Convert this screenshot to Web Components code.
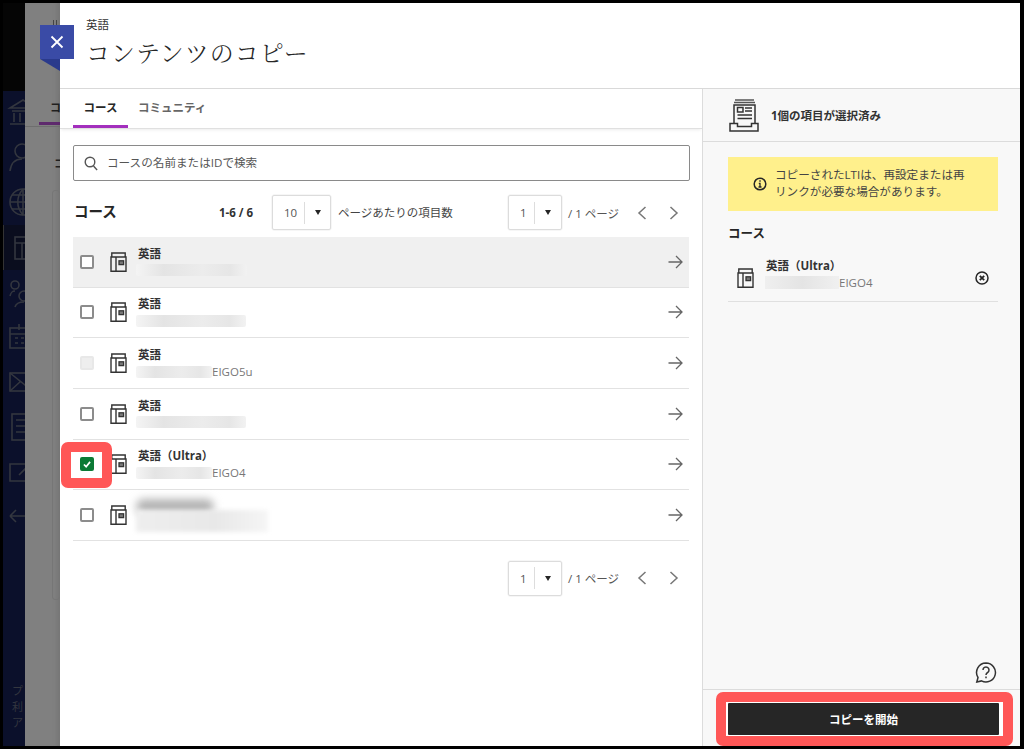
<!DOCTYPE html>
<html lang="ja">
<head>
<meta charset="utf-8">
<title>コンテンツのコピー</title>
<style>
    html, body { margin: 0; height: 749px; overflow: hidden; background: #000; }
    body { font-family: "Open Sans", "Noto Sans CJK JP", sans-serif; color: #262626; }
    app-shell { width: 1024px; height: 749px; }
</style>
</head>
<body>
<app-shell>
    <bg-nav slot="nav"></bg-nav>
    <bg-page slot="page"></bg-page>
    <copy-modal slot="modal">
        <span slot="crumb">英語</span>
        <span slot="title">コンテンツのコピー</span>
        <course-tabs slot="tabs"></course-tabs>
        <search-box slot="search" placeholder="コースの名前またはIDで検索"></search-box>
        <course-toolbar slot="toolbar"></course-toolbar>
        <course-row slot="list" hover title-text="英語" blur="136,111"></course-row>
        <course-row slot="list" title-text="英語" blur="136,110"></course-row>
        <course-row slot="list" disabled title-text="英語" blur="136,76" code="EIGO5u"></course-row>
        <course-row slot="list" title-text="英語" blur="136,110"></course-row>
        <course-row slot="list" checked title-text="英語（Ultra）" blur="136,76" code="EIGO4"></course-row>
        <course-row slot="list" hidden-name></course-row>
        <page-nav slot="pager"></page-nav>
        <selected-panel slot="side"></selected-panel>
    </copy-modal>
</app-shell>

<script>
const ICONS = {
    course: `<svg width="17" height="20" viewBox="0 0 17 20" fill="none" stroke="#333" stroke-width="1.4"><path d="M1.800 5V1h13.400v4M1 5h15v14.200H1zM6 5v14.200"/><rect x="9" y="8.800" width="4.600" height="3.800" stroke-width="1.300" fill="#777"/></svg>`,
    arrow: `<svg width="15" height="14" viewBox="0 0 15 14" fill="none" stroke="#666" stroke-width="1.3"><path d="M0.500 7h13.500M8 1l6 6-6 6"/></svg>`,
    left: `<svg width="10" height="14" viewBox="0 0 10 14" fill="none" stroke="#777" stroke-width="1.500"><path d="M8.500 1L2 7l6.500 6"/></svg>`,
    right: `<svg width="10" height="14" viewBox="0 0 10 14" fill="none" stroke="#777" stroke-width="1.500"><path d="M1.500 1L8 7l-6.500 6"/></svg>`,
    search: `<svg width="14" height="15" viewBox="0 0 14 15" fill="none" stroke="#555" stroke-width="1.400"><circle cx="6" cy="6" r="4.800"/><path d="M9.500 10l3.600 4"/></svg>`,
    tray: `<svg width="30" height="33" viewBox="0 0 30 33" fill="none" stroke="#333" stroke-width="1.500"><path d="M6 1h19M5 3.500h21" stroke="#555"/><path d="M5 24V6h21v18"/><rect x="8.500" y="8.500" width="5.500" height="4.500"/><path d="M16 9h7M16 12h7M8.500 16h14.500M8.500 19.500h14.500"/><path d="M1 24.500h7.500v3h14v-3H29v7.500H1z"/></svg>`,
    info: `<svg width="14" height="14" viewBox="0 0 14 14" fill="none" stroke="#262626" stroke-width="1.500"><circle cx="7" cy="7" r="5.800"/><path d="M5.500 10h3M7 10V6.300H5.800" stroke-width="1.300"/><path d="M6.300 4h1.400" stroke-width="1.300"/></svg>`,
    remove: `<svg width="14" height="14" viewBox="0 0 14 14" fill="none" stroke="#262626" stroke-width="1.500"><circle cx="7" cy="7" r="6"/><path d="M4.800 4.800l4.400 4.400M9.200 4.800l-4.400 4.400" stroke-width="1.800"/></svg>`,
    help: `<svg width="22" height="21" viewBox="0 0 22 21" fill="none" stroke="#333" stroke-width="1.500"><path d="M11 1a9.500 9.500 0 1 1-4.500 17.900L1.800 20l1.200-4.500A9.500 9.500 0 0 1 11 1z"/><path d="M8 8a3 3 0 1 1 4.600 2.500c-1.100.7-1.600 1.200-1.600 2.500"/><path d="M11 14.500v1.800"/></svg>`,
    close: `<svg width="14" height="14" viewBox="0 0 14 14" fill="none" stroke="#fff" stroke-width="1.800"><path d="M1.500 1.500l11 11M12.500 1.500l-11 11"/></svg>`,
    check: `<svg width="8" height="7" viewBox="0 0 9 8" fill="none" stroke="#fff" stroke-width="2"><path d="M1 4l2.500 2.500L8 1"/></svg>`
};

const NAV_ICONS = [
    `<path d="M3 12L16 4l13 8zM5 15h22M7 17v9M13 17v9M19 17v9M25 17v9M3 28h26"/>`,
    `<circle cx="15" cy="10" r="7"/><path d="M3 30c1-8 5-12 12-12"/>`,
    `<circle cx="16" cy="16" r="13"/><path d="M3 16h26M5 9h22M5 23h22M16 3c-7 8-7 18 0 26M16 3v26"/>`,
    `<rect x="8" y="6" width="22" height="22"/><path d="M8 12h22M15 12v16"/><rect x="19" y="16" width="6" height="5"/>`,
    `<circle cx="8" cy="9" r="4"/><circle cx="17" cy="20" r="5"/><path d="M3 20c1-4 2-5 5-5M8 31c1-4 4-5 9-5"/>`,
    `<rect x="3" y="8" width="28" height="20"/><path d="M3 14h28M8 18h3M14 18h3M8 23h3M14 23h3M12 4v6"/>`,
    `<rect x="3" y="8" width="30" height="18"/><path d="M3 8l15 12L33 8M3 26l11-10"/>`,
    `<rect x="5" y="4" width="24" height="26"/><path d="M9 10h20M9 16h20M9 22h20"/>`,
    `<path d="M18 9H3v17h15M12 20L26 6"/>`,
    `<path d="M28 6c-3-2-6-2-8-1v22c3 1 6 1 8-1M3 16h22M3 16l6-6M3 16l6 6"/>`
];

class AppShell extends HTMLElement {
    constructor() {
        super();
        this.attachShadow({ mode: 'open' });
        this.shadowRoot.innerHTML = `
        <style>
            :host { display: flex; box-sizing: border-box; padding: 3px 4px 3px 3px; background: #000; }
            ::slotted([slot="nav"]) { flex: 0 0 22px; }
            ::slotted([slot="page"]) { flex: 0 0 35px; }
            ::slotted([slot="modal"]) { flex: 0 0 960px; }
        </style>
        <slot name="nav"></slot><slot name="page"></slot><slot name="modal"></slot>`;
    }
}

class BgNav extends HTMLElement {
    constructor() {
        super();
        this.attachShadow({ mode: 'open' });
        const items = NAV_ICONS.map((d, i) => `<div class="item ${i === 3 ? 'on' : ''}">
            <svg width="36" height="34" viewBox="0 0 36 34" fill="none" stroke="#33363f" stroke-width="1.600">${d}</svg></div>`).join('');
        this.shadowRoot.innerHTML = `
        <style>
            :host { display: flex; flex-direction: column; overflow: hidden; background: #0b102b; }
            .top { height: 88px; background: #050505; flex: none; }
            .item { height: 44.800px; display: flex; align-items: center; padding-left: 4px; box-sizing: border-box; }
            .item svg { flex: none; display: block; }
            .on { background: #0a0d1e; border-left: 1px solid #333; padding-left: 3px; }
            .foot { margin-top: auto; padding: 0 0 15px 9px; font-size: 11px; line-height: 16px; color: #33363f; }
        </style>
        <div class="top"></div>
        <div class="items">${items}</div>
        <div class="foot">プ<br>利<br>ア</div>`;
    }
}

class BgPage extends HTMLElement {
    constructor() {
        super();
        this.attachShadow({ mode: 'open' });
        this.shadowRoot.innerHTML = `
        <style>
            :host { display: block; overflow: hidden; background: #808080; box-shadow: inset -6px 0 4px -3px #767676; font-weight: 700; color: #1f1f1f; font-size: 11px; }
            .marks { height: 88px; box-sizing: border-box; padding: 17px 0 0 28px; display: flex; gap: 2px; }
            .marks i { display: block; width: 1px; height: 5px; background: #444; }
            .tab { height: 36px; box-sizing: border-box; padding-top: 8px; border-bottom: 1px solid #6e6e6e; }
            .tab span { display: block; padding-left: 25px; line-height: 17px; }
            .tab i { display: block; width: 30px; height: 3px; background: #5e2a6d; margin: 6px 0 0 14px; }
            .h { padding: 28px 0 0 29px; height: 25px; font-size: 11px; }
            .card { margin: 10px 0 0 27px; height: 408px; border: 1px solid #767676; border-radius: 3px; }
        </style>
        <div class="marks"><i></i><i></i></div>
        <div class="tab"><span>コ</span><i></i></div>
        <div class="h">コ</div>
        <div class="card"></div>`;
    }
}

class CopyModal extends HTMLElement {
    constructor() {
        super();
        this.attachShadow({ mode: 'open' });
        this.shadowRoot.innerHTML = `
        <style>
            :host { display: flex; flex-direction: column; position: relative; background: #fff; overflow: visible; }
            header { height: 86px; box-sizing: border-box; border-bottom: 1px solid #d9d9d9; padding: 14px 0 0 26px; flex: none; }
            .crumb { font-size: 11.500px; line-height: 16px; color: #333; }
            .title { font-family: "Noto Serif CJK JP", "Noto Sans CJK JP", serif; font-size: 24px; font-weight: 300; line-height: 36px; color: #262626; margin: 1px 0 0 0; letter-spacing: 1px; }
            .close { position: absolute; left: -20px; top: 22px; width: 34px; height: 34px; background: #3a4ba6; display: flex; align-items: center; justify-content: center; }
            .close::after { content: ""; position: absolute; left: 0; top: 34px; border-style: solid; border-width: 0 20px 12px 0; border-color: transparent #2a3a8c transparent transparent; }
            .body { flex: 1; display: flex; min-height: 0; }
            .left { flex: 0 0 642px; display: flex; flex-direction: column; box-sizing: border-box; }
            .inner { padding: 16px 13px 0; display: flex; flex-direction: column; }
            .list { margin-top: 7px; }
            ::slotted([slot="side"]) { flex: 1; }
        </style>
        <header>
            <div class="crumb"><slot name="crumb"></slot></div>
            <div class="title"><slot name="title"></slot></div>
        </header>
        <div class="close">${ICONS.close}</div>
        <div class="body">
            <div class="left">
                <slot name="tabs"></slot>
                <div class="inner">
                    <slot name="search"></slot>
                    <slot name="toolbar"></slot>
                    <div class="list"><slot name="list"></slot></div>
                    <slot name="pager"></slot>
                </div>
            </div>
            <slot name="side"></slot>
        </div>`;
    }
}

class CourseTabs extends HTMLElement {
    constructor() {
        super();
        this.attachShadow({ mode: 'open' });
        this.shadowRoot.innerHTML = `
        <style>
            :host { display: flex; height: 40px; box-sizing: border-box; padding-left: 13px; border-bottom: 1px solid #e0e0e0; box-shadow: 0 2px 3px -1px rgba(0,0,0,.08); font-size: 11.500px; font-weight: 700; }
            div { height: 39px; box-sizing: border-box; padding-top: 10px; line-height: 18px; }
            .on { width: 55px; text-align: center; border-bottom: 3px solid #a32fbd; color: #262626; }
            .off { margin-left: 10px; color: #666; }
        </style>
        <div class="on">コース</div><div class="off">コミュニティ</div>`;
    }
}

class SearchBox extends HTMLElement {
    constructor() {
        super();
        this.attachShadow({ mode: 'open' });
        this.shadowRoot.innerHTML = `
        <style>
            :host { display: flex; align-items: center; height: 36px; margin-right: -1px; box-sizing: border-box; border: 1px solid #8a8a8a; border-radius: 2px; padding-left: 10px; }
            span { margin: -3px 0 0 9px; font-size: 11.600px; color: #555; }
            svg { display: block; }
        </style>
        ${ICONS.search}<span>${this.getAttribute('placeholder')}</span>`;
    }
}

class PageSelect extends HTMLElement {
    constructor() {
        super();
        this.attachShadow({ mode: 'open' });
        const wide = this.hasAttribute('wide');
        this.shadowRoot.innerHTML = `
        <style>
            :host { display: flex; align-items: center; box-sizing: border-box; width: ${wide ? 59 : 54}px; height: 35px; border: 1px solid #dcdcdc; border-radius: 2px; font-size: 11.500px; color: #555; box-shadow: 0 0 0 .5px #eee; flex: none; }
            .v { width: ${wide ? 31 : 25}px; padding-left: 11px; box-sizing: border-box; }
            .d { width: 1px; height: 22px; background: #ddd; }
            .a { margin-left: 10px; width: 0; height: 0; border-style: solid; border-width: 5px 3.500px 0; border-color: #262626 transparent transparent; }
        </style>
        <span class="v"><slot></slot></span><span class="d"></span><span class="a"></span>`;
    }
}

class PageNav extends HTMLElement {
    constructor() {
        super();
        this.attachShadow({ mode: 'open' });
        this.shadowRoot.innerHTML = `
        <style>
            :host { display: flex; align-items: center; justify-content: flex-end; height: 35px; margin-top: 20px; font-size: 11.500px; color: #555; }
            .t { margin-left: 6px; width: 52px; white-space: nowrap; }
            .p { margin-left: 17px; display: flex; }
            .n { margin-left: 22px; display: flex; margin-right: 10px; }
        </style>
        <page-select>1</page-select><span class="t">/ 1 ページ</span>
        <span class="p">${ICONS.left}</span><span class="n">${ICONS.right}</span>`;
    }
}

class CourseToolbar extends HTMLElement {
    constructor() {
        super();
        this.attachShadow({ mode: 'open' });
        this.shadowRoot.innerHTML = `
        <style>
            :host { display: flex; align-items: center; height: 35px; margin-top: 14px; font-size: 11.500px; color: #444; }
            h2 { margin: -5px 0 0 1px; width: 145px; font-size: 14.500px; font-weight: 700; color: #262626; }
            .count { width: 53px; font-weight: 700; color: #333; white-space: nowrap; }
            .per { margin-left: 7px; white-space: nowrap; margin-top: -1px; }
            page-nav { flex: 1; margin-top: 0; }
        </style>
        <h2>コース</h2><span class="count">1-6 / 6</span>
        <page-select wide>10</page-select><span class="per">ページあたりの項目数</span>
        <page-nav></page-nav>`;
    }
}

class HlFrame extends HTMLElement {
    constructor() {
        super();
        this.attachShadow({ mode: 'open' });
        this.shadowRoot.innerHTML = `
        <style>
            :host { display: block; box-sizing: border-box; border: 10px solid #ff5757; border-radius: 7px; }
        </style>
        <slot></slot>`;
    }
}

class CourseRow extends HTMLElement {
    constructor() {
        super();
        this.attachShadow({ mode: 'open' });
        const title = this.getAttribute('title-text') || '';
        const bw = Number((this.getAttribute('blur') || '0,0').split(',')[1]);
        const code = this.getAttribute('code') || '';
        const checked = this.hasAttribute('checked');
        const box = this.hasAttribute('disabled') ? 'box dis' : checked ? 'box chk' : 'box';
        const text = this.hasAttribute('hidden-name')
            ? `<div class="smear dark"></div><div class="smear wide"></div>`
            : `<div class="t">${title}</div><div class="s"><i style="width:${bw}px"></i>${code}</div>`;
        this.shadowRoot.innerHTML = `
        <style>
            :host { display: flex; align-items: center; position: relative; height: 50.650px; box-sizing: border-box; border-bottom: 1px solid #e2e2e2; padding-left: 7px; }
            :host([hover]) { background: #f0f0f0; }
            .box { width: 14px; height: 14px; box-sizing: border-box; border: 2px solid #8c8c8c; border-radius: 2px; background: #fff; flex: none; display: flex; align-items: center; justify-content: center; }
            .dis { border-color: #e8e8e8; background: #eee; }
            .chk { border-color: #0b7a35; background: #0b7a35; }
            .ic { margin-left: 16px; display: flex; flex: none; }
            .txt { margin-left: 11px; flex: 1; position: relative; height: 50px; }
            .t { position: absolute; left: 0; top: 8px; font-size: 11.500px; line-height: 18px; font-weight: 700; color: #333; white-space: nowrap; }
            .s { position: absolute; left: -2px; top: 26.500px; height: 14px; display: flex; align-items: center; font-size: 11.500px; color: #777; }
            .s i { display: block; height: 12px; background: linear-gradient(90deg, #f4f4f4, #e4e4e4 25%, #ececec 60%, #e6e6e6 85%, #f2f2f2); border-radius: 2px; }
            .smear { position: absolute; left: -2px; }
            .dark { top: 9px; width: 78px; height: 15px; background: #b4b4b4; filter: blur(4px); border-radius: 8px; }
            .wide { top: 20px; width: 132px; height: 22px; background: linear-gradient(90deg, #eee, #e8e8e8 60%, #f5f5f5); filter: blur(2px); }
            .arr { margin-right: 6px; display: flex; flex: none; }
            hl-frame { position: absolute; left: -12px; top: 2.500px; width: 51px; height: 46px; z-index: 2; }
        </style>
        <span class="${box}">${checked ? ICONS.check : ''}</span>
        <span class="ic">${ICONS.course}</span>
        <div class="txt">${text}</div>
        <span class="arr">${ICONS.arrow}</span>
        ${checked ? '<hl-frame></hl-frame>' : ''}`;
    }
}

class SelectedPanel extends HTMLElement {
    constructor() {
        super();
        this.attachShadow({ mode: 'open' });
        this.shadowRoot.innerHTML = `
        <style>
            :host { display: flex; flex-direction: column; box-sizing: border-box; background: #f8f8f8; border-left: 1px solid #dcdcdc; min-width: 0; }
            .head { height: 53px; flex: none; box-sizing: border-box; border-bottom: 1px solid #dcdcdc; display: flex; align-items: center; padding: 0 0 0 26px; font-size: 11.500px; font-weight: 700; color: #333; }
            .head span { margin-left: 12px; }
            .head svg { display: block; }
            .main { flex: 1; padding: 15px 22px 0 25px; position: relative; }
            .note { height: 54px; background: #fff08c; display: flex; align-items: center; box-sizing: border-box; padding-left: 25px; font-size: 11.600px; line-height: 17px; color: #444; }
            .note p { margin: -2px 0 0 8px; width: 194px; }
            .note svg { flex: none; display: block; }
            h3 { margin: 14px 0 0; font-size: 12.500px; line-height: 18px; font-weight: 700; color: #262626; }
            .item { margin-top: 11px; box-sizing: border-box; border-bottom: 1px solid #e0e0e0; display: flex; align-items: center; padding: 0 9px; height: 48px; }
            .item .ic { display: flex; flex: none; }
            .item .tx { margin-left: 12px; flex: 1; margin-top: -9px; }
            .tl { font-size: 11.500px; line-height: 18px; font-weight: 700; color: #333; }
            .cd { display: flex; align-items: center; height: 14px; margin-left: -1px; font-size: 11.500px; color: #777; }
            .cd i { display: block; width: 74px; height: 13px; background: linear-gradient(90deg, #efefef, #e4e4e4 50%, #f0f0f0); }
            .help { position: absolute; right: 23px; bottom: 6px; display: flex; }
            .foot { flex: none; height: 57px; box-sizing: border-box; border-top: 1px solid #dcdcdc; padding: 2px 7px 0 13px; }
            hl-frame { height: 54px; background: #fff; padding: 1px 4px 1px 2px; }
            button { display: block; width: 100%; height: 32px; border: 0; border-radius: 1px; background: #262626; color: #fff; font: 700 11.500px "Open Sans", "Noto Sans CJK JP", sans-serif; padding: 0; }
        </style>
        <div class="head">${ICONS.tray}<span>1個の項目が選択済み</span></div>
        <div class="main">
            <div class="note">${ICONS.info}<p>コピーされたLTIは、再設定または再リンクが必要な場合があります。</p></div>
            <h3>コース</h3>
            <div class="item">
                <span class="ic">${ICONS.course}</span>
                <div class="tx"><div class="tl">英語（Ultra）</div><div class="cd"><i></i>EIGO4</div></div>
                ${ICONS.remove}
            </div>
            <div class="help">${ICONS.help}</div>
        </div>
        <div class="foot"><hl-frame><button>コピーを開始</button></hl-frame></div>`;
    }
}

customElements.define('hl-frame', HlFrame);
customElements.define('app-shell', AppShell);
customElements.define('bg-nav', BgNav);
customElements.define('bg-page', BgPage);
customElements.define('course-tabs', CourseTabs);
customElements.define('search-box', SearchBox);
customElements.define('page-select', PageSelect);
customElements.define('page-nav', PageNav);
customElements.define('course-toolbar', CourseToolbar);
customElements.define('course-row', CourseRow);
customElements.define('selected-panel', SelectedPanel);
customElements.define('copy-modal', CopyModal);
</script>
</body>
</html>
